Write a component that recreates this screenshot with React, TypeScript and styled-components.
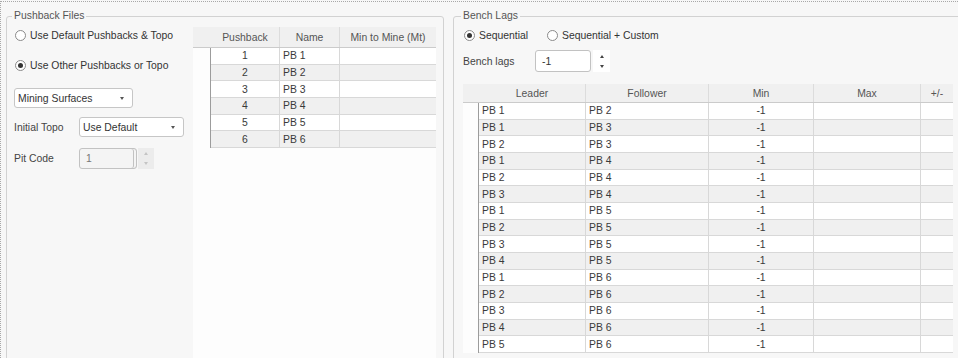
import React from "react";
import styled, { createGlobalStyle } from "styled-components";

const GlobalStyle = createGlobalStyle`
  html, body { margin: 0; padding: 0; background: #f7f7f7; }
  body {
    font-family: "Liberation Sans", Arial, sans-serif;
    font-size: 10.4px;
    color: #333;
    overflow: hidden;
  }
`;

const Page = styled.div`
  width: 958px;
  height: 357px;
  margin-top: 1px;
  box-sizing: border-box;
  border-top: 1px dotted #a8a8a8;
  border-left: 1px dotted #a8a8a8;
  padding-left: 5px;
  display: flex;
  gap: 9px;
  overflow: hidden;
`;

const Group = styled.fieldset<{ $w: number; $pl: number }>`
  flex: none;
  width: ${(p) => p.$w}px;
  height: 420px;
  margin: 7px 0 0 0;
  padding: 0 0 0 ${(p) => p.$pl}px;
  box-sizing: border-box;
  border: 1px solid #d2d2d2;
  border-radius: 3px;
  min-width: 0;
`;

const Legend = styled.legend`
  padding: 0 2px;
  margin-left: -2px;
  line-height: 14px;
  color: #555;
`;

const GroupBody = styled.div`
  display: flex;
  align-items: flex-start;
  height: 400px;
`;

const Controls = styled.div<{ $w: number }>`
  width: ${(p) => p.$w}px;
  flex: none;
  display: flex;
  flex-direction: column;
`;

const Column = styled.div`
  display: flex;
  flex-direction: column;
  align-self: stretch;
`;

const Line = styled.div<{ $mt: number; $h: number }>`
  display: flex;
  align-items: center;
  margin-top: ${(p) => p.$mt}px;
  height: ${(p) => p.$h}px;
`;

const RadioItem = styled.label<{ $w?: number }>`
  display: flex;
  align-items: center;
  gap: 4px;
  width: ${(p) => (p.$w ? `${p.$w}px` : "auto")};
  color: #333;
  white-space: nowrap;
`;

const RadioCircle = styled.span<{ $on?: boolean }>`
  width: 11px;
  height: 11px;
  box-sizing: border-box;
  border: 1px solid #8a8a8a;
  border-radius: 50%;
  background: #fff;
  margin-left: 1px;
  display: flex;
  align-items: center;
  justify-content: center;
  &::after {
    content: "";
    display: ${(p) => (p.$on ? "block" : "none")};
    width: 5px;
    height: 5px;
    border-radius: 50%;
    background: #333;
  }
`;

const FieldLabel = styled.span<{ $w: number }>`
  width: ${(p) => p.$w}px;
  flex: none;
  color: #444;
`;

const Combo = styled.div<{ $w: number }>`
  width: ${(p) => p.$w}px;
  height: 20px;
  box-sizing: border-box;
  border: 1px solid #c6c6c6;
  border-radius: 3px;
  background: #fff;
  display: flex;
  align-items: center;
  justify-content: space-between;
  padding: 0 8px 0 3px;
  color: #333;
`;

const Caret = styled.span<{ $c?: string }>`
  width: 0;
  height: 0;
  border-left: 2.5px solid transparent;
  border-right: 2.5px solid transparent;
  border-top: 3px solid ${(p) => p.$c || "#555"};
`;

const CaretUp = styled.span<{ $c?: string }>`
  width: 0;
  height: 0;
  border-left: 2.5px solid transparent;
  border-right: 2.5px solid transparent;
  border-bottom: 3px solid ${(p) => p.$c || "#555"};
`;

const NumBox = styled.div<{ $w: number; $h: number; $disabled?: boolean }>`
  width: ${(p) => p.$w}px;
  height: ${(p) => p.$h}px;
  box-sizing: border-box;
  border: 1px solid #c2c2c2;
  border-radius: 3px;
  background: ${(p) => (p.$disabled ? "#f4f4f4" : "#fff")};
  color: ${(p) => (p.$disabled ? "#777" : "#333")};
  display: flex;
  align-items: center;
  padding-left: 6px;
  box-shadow: ${(p) =>
    p.$disabled ? "inset -2px 0 0 #f4f4f4, inset -3px 0 0 #c2c2c2" : "none"};
`;

const Spin = styled.div<{ $w: number; $h: number; $bg: string; $ml: number }>`
  width: ${(p) => p.$w}px;
  height: ${(p) => p.$h}px;
  margin-left: ${(p) => p.$ml}px;
  background: ${(p) => p.$bg};
  display: flex;
  flex-direction: column;
  align-items: center;
  justify-content: center;
  gap: 7px;
`;

const TableArea = styled.div<{ $w: number; $mt: number }>`
  width: ${(p) => p.$w}px;
  flex: none;
  margin-top: ${(p) => p.$mt}px;
  align-self: stretch;
  background: #fdfdfd;
  display: flex;
  flex-direction: column;
`;

const HeaderRow = styled.div<{ $h: number }>`
  display: flex;
  height: ${(p) => p.$h}px;
  box-sizing: border-box;
  background: #f0f0f0;
  border-bottom: 1px solid #cbcbcb;
`;

const HeadCell = styled.div<{ $w: number; $sep?: boolean }>`
  width: ${(p) => p.$w}px;
  flex: none;
  box-sizing: border-box;
  display: flex;
  align-items: center;
  justify-content: center;
  color: #555;
  border-right: ${(p) => (p.$sep ? "1px solid #dcdcdc" : "none")};
  white-space: nowrap;
`;

const Row = styled.div`
  display: flex;
  height: 16.67px;
`;

const RowHead = styled.div<{ $w: number }>`
  width: ${(p) => p.$w}px;
  flex: none;
  box-sizing: border-box;
  background: #fdfdfd;
  border-right: 1px solid #9c9c9c;
`;

const Cell = styled.div<{ $w: number; $alt: boolean; $center?: boolean; $last?: boolean }>`
  width: ${(p) => p.$w}px;
  flex: none;
  box-sizing: border-box;
  background: ${(p) => (p.$alt ? "#f0f0f0" : "#ffffff")};
  border-bottom: 1px solid #d8d8d8;
  border-right: ${(p) => (p.$last ? "none" : "1px solid #d8d8d8")};
  display: flex;
  align-items: center;
  justify-content: ${(p) => (p.$center ? "center" : "flex-start")};
  padding-left: ${(p) => (p.$center ? 0 : 3)}px;
  color: #3a3a3a;
  white-space: nowrap;
`;

type Col = { title: string; w: number; center?: boolean };

const DataGrid: React.FC<{
  width: number;
  mt: number;
  headH: number;
  rowHeadW: number;
  cols: Col[];
  rows: string[][];
}> = ({ width, mt, headH, rowHeadW, cols, rows }) => (
  <TableArea $w={width} $mt={mt}>
    <HeaderRow $h={headH}>
      <HeadCell $w={rowHeadW} />
      {cols.map((c, i) => (
        <HeadCell key={c.title} $w={c.w} $sep={i < cols.length - 1}>
          {c.title}
        </HeadCell>
      ))}
    </HeaderRow>
    {rows.map((r, ri) => (
      <Row key={ri}>
        <RowHead $w={rowHeadW} />
        {cols.map((c, ci) => (
          <Cell
            key={ci}
            $w={c.w}
            $alt={ri % 2 === 1}
            $center={c.center}
            $last={ci === cols.length - 1}
          >
            {r[ci]}
          </Cell>
        ))}
      </Row>
    ))}
  </TableArea>
);

const pbCols: Col[] = [
  { title: "Pushback", w: 69, center: true },
  { title: "Name", w: 60 },
  { title: "Min to Mine (Mt)", w: 96 },
];
const pbRows = [1, 2, 3, 4, 5, 6].map((n) => [String(n), `PB ${n}`, ""]);

const lagCols: Col[] = [
  { title: "Leader", w: 107 },
  { title: "Follower", w: 123 },
  { title: "Min", w: 105, center: true },
  { title: "Max", w: 107, center: true },
  { title: "+/-", w: 32, center: true },
];
const pairs: [number, number][] = [
  [1, 2], [1, 3], [2, 3], [1, 4], [2, 4], [3, 4], [1, 5], [2, 5],
  [3, 5], [4, 5], [1, 6], [2, 6], [3, 6], [4, 6], [5, 6],
];
const lagRows = pairs.map(([a, b]) => [`PB ${a}`, `PB ${b}`, "-1", "", ""]);

export default function App() {
  return (
    <>
      <GlobalStyle />
      <Page>
        <Group $w={438} $pl={7}>
          <Legend>Pushback Files</Legend>
          <GroupBody>
            <Controls $w={179}>
              <Line $mt={4} $h={16}>
                <RadioItem>
                  <RadioCircle />
                  Use Default Pushbacks &amp; Topo
                </RadioItem>
              </Line>
              <Line $mt={14} $h={16}>
                <RadioItem>
                  <RadioCircle $on />
                  Use Other Pushbacks or Topo
                </RadioItem>
              </Line>
              <Line $mt={15} $h={20}>
                <Combo $w={119}>
                  Mining Surfaces
                  <Caret />
                </Combo>
              </Line>
              <Line $mt={9} $h={20}>
                <FieldLabel $w={65}>Initial Topo</FieldLabel>
                <Combo $w={105}>
                  Use Default
                  <Caret />
                </Combo>
              </Line>
              <Line $mt={11} $h={21}>
                <FieldLabel $w={65}>Pit Code</FieldLabel>
                <NumBox $w={58} $h={21} $disabled>
                  1
                </NumBox>
                <Spin $w={16} $h={21} $bg="#ececec" $ml={1}>
                  <CaretUp $c="#c4c4c4" />
                  <Caret $c="#c4c4c4" />
                </Spin>
              </Line>
            </Controls>
            <DataGrid
              width={243}
              mt={4}
              headH={21}
              rowHeadW={18}
              cols={pbCols}
              rows={pbRows}
            />
          </GroupBody>
        </Group>
        <Group $w={560} $pl={9}>
          <Legend>Bench Lags</Legend>
          <GroupBody>
            <Column>
              <Line $mt={4} $h={16}>
                <RadioItem $w={83}>
                  <RadioCircle $on />
                  Sequential
                </RadioItem>
                <RadioItem>
                  <RadioCircle />
                  Sequential + Custom
                </RadioItem>
              </Line>
              <Line $mt={7} $h={22}>
                <FieldLabel $w={72}>Bench lags</FieldLabel>
                <NumBox $w={56} $h={22}>
                  -1
                </NumBox>
                <Spin $w={17} $h={22} $bg="#ffffff" $ml={2}>
                  <CaretUp $c="#444" />
                  <Caret $c="#444" />
                </Spin>
              </Line>
              <DataGrid
                width={490}
                mt={12}
                headH={19}
                rowHeadW={16}
                cols={lagCols}
                rows={lagRows}
              />
            </Column>
          </GroupBody>
        </Group>
      </Page>
    </>
  );
}
